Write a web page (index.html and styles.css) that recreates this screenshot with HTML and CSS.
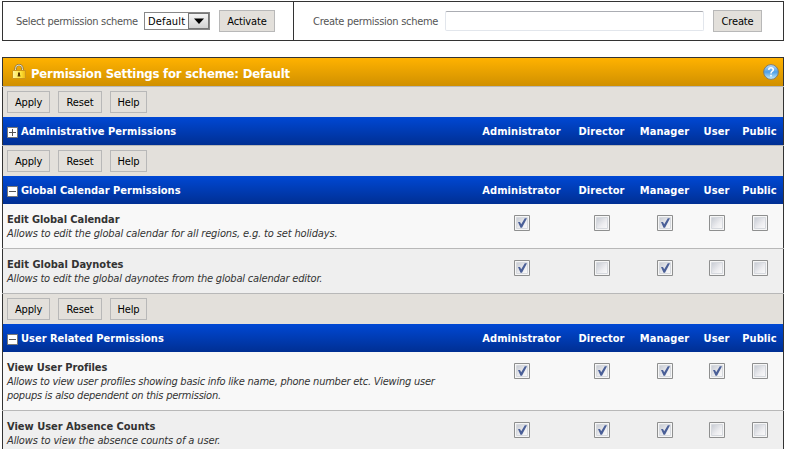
FILE: index.html
```html
<!DOCTYPE html>
<html lang="en">
<head>
<meta charset="utf-8">
<title>Permission Settings</title>
<link rel="stylesheet" href="styles.css">
</head>
<body>
<svg class="defs" aria-hidden="true">
  <defs>
    <linearGradient id="well" x1="0" y1="0" x2="1" y2="1"><stop offset="0" stop-color="#c6cad2"/><stop offset=".6" stop-color="#ededf0"/><stop offset="1" stop-color="#fafafa"/></linearGradient>
    <linearGradient id="gold" x1="0" y1="0" x2="1" y2="0"><stop offset="0" stop-color="#fff4a0"/><stop offset=".6" stop-color="#ffe640"/><stop offset="1" stop-color="#efb810"/></linearGradient>
    <linearGradient id="glass" x1="0" y1="0" x2="0" y2="1"><stop offset="0" stop-color="#bcdcf6"/><stop offset=".5" stop-color="#4f9fe6"/><stop offset="1" stop-color="#c9f0ff"/></linearGradient>
    <symbol id="off" viewBox="0 0 16 16"><path fill="#f6f6f6" stroke="#8e8f8f" d="M.5.5h15v15H.5z"/><path fill="url(#well)" stroke="#d6d9de" d="M2.500 2.500h11v11h-11z"/></symbol>
    <symbol id="on" viewBox="0 0 16 16"><use href="#off"/><path fill="#4a5f97" d="M4 7h2l1.200 2.200L10.800 3.200h2.200L8 12.800H6.500z"/></symbol>
    <symbol id="minus" viewBox="0 0 11 11"><path fill="#fff" stroke="#777" d="M.5.5h10v10H.5z"/><path fill="none" stroke="#555" d="M2 5.500h7"/></symbol>
    <symbol id="plus" viewBox="0 0 11 11"><use href="#minus"/><path fill="none" stroke="#555" d="M5.500 2v7"/></symbol>
  </defs>
</svg>
<div class="schemes">
  <div class="pick"><span class="label">Select permission scheme</span>
    <div class="select"><span>Default</span><i><svg width="10" height="6"><path d="M0 .5h10L5 6z"/></svg></i></div>
    <button class="btn activate">Activate</button></div>
  <div class="make"><span class="label">Create permission scheme</span><input type="text"><button class="btn create">Create</button></div>
</div>
<div class="table">
  <div class="title">
    <svg class="lock" width="14" height="16" viewBox="0 0 14 16"><path d="M3.500 8V4.500a3.500 3.500 0 0 1 7 0V8" fill="none" stroke="#8a7440" stroke-width="2.200"/><path d="M3.500 8V4.500a3.500 3.500 0 0 1 7 0V8" fill="none" stroke="#e4dec4" stroke-width="1"/><path d="M.5 6.500h13v8H.5z" fill="url(#gold)" stroke="#cf9618"/><path d="M6 8.500h2v2l.5 2h-3l.5-2z" fill="#5b3a00"/></svg>
    <h1>Permission Settings for scheme: Default</h1>
    <svg class="help" width="16" height="16" viewBox="0 0 16 16"><circle cx="8" cy="8" r="7.400" fill="url(#glass)" stroke="#807c6c"/><path d="M5.700 5.800Q5.900 3.700 8 3.700T10.300 5.700Q10.300 6.700 9.100 7.400 8 8.100 8 9.400M8 10.700v1.800" fill="none" stroke="#fff" stroke-width="1.600"/></svg>
  </div>
  <div class="rule"></div>
  <div class="tools"><button class="btn apply">Apply</button><button class="btn reset">Reset</button><button class="btn helpb">Help</button></div>
  <div class="row head"><h2 class="wide"><svg><use href="#plus"/></svg><span>Administrative Permissions</span></h2><b>Administrator</b><b>Director</b><b>Manager</b><b>User</b><b>Public</b></div>
  <div class="rule"></div>
  <div class="tools"><button class="btn apply">Apply</button><button class="btn reset">Reset</button><button class="btn helpb">Help</button></div>
  <div class="row head"><h2><svg><use href="#minus"/></svg><span>Global Calendar Permissions</span></h2><b>Administrator</b><b>Director</b><b>Manager</b><b>User</b><b>Public</b></div>
  <div class="row perm"><div><h3 class="snug">Edit Global Calendar</h3><p class="loose">Allows to edit the global calendar for all regions, e.g. to set holidays.</p></div><svg><use href="#on"/></svg><svg><use href="#off"/></svg><svg><use href="#on"/></svg><svg><use href="#off"/></svg><svg><use href="#off"/></svg></div>
  <div class="rule"></div>
  <div class="row perm alt"><div><h3>Edit Global Daynotes</h3><p class="medium">Allows to edit the global daynotes from the global calendar editor.</p></div><svg><use href="#on"/></svg><svg><use href="#off"/></svg><svg><use href="#on"/></svg><svg><use href="#off"/></svg><svg><use href="#off"/></svg></div>
  <div class="rule"></div>
  <div class="tools"><button class="btn apply">Apply</button><button class="btn reset">Reset</button><button class="btn helpb">Help</button></div>
  <div class="row head"><h2><svg><use href="#minus"/></svg><span>User Related Permissions</span></h2><b>Administrator</b><b>Director</b><b>Manager</b><b>User</b><b>Public</b></div>
  <div class="row perm tall"><div><h3 class="snug">View User Profiles</h3><p>Allows to view user profiles showing basic info like name, phone number etc. Viewing user<br>popups is also dependent on this permission.</p></div><svg><use href="#on"/></svg><svg><use href="#on"/></svg><svg><use href="#on"/></svg><svg><use href="#on"/></svg><svg><use href="#off"/></svg></div>
  <div class="rule"></div>
  <div class="row perm alt"><div><h3>View User Absence Counts</h3><p class="loose">Allows to view the absence counts of a user.</p></div><svg><use href="#on"/></svg><svg><use href="#on"/></svg><svg><use href="#on"/></svg><svg><use href="#off"/></svg><svg><use href="#off"/></svg></div>
</div>
</body>
</html>
```
FILE: styles.css
```css
* { box-sizing: border-box; margin: 0; padding: 0; }
html { overflow: hidden; }
body { height: 449px; overflow: hidden; padding: 1px 3px 0 2px; background: #fff; color: #333; font: 11px/14px "DejaVu Sans Condensed", "DejaVu Sans", sans-serif; font-stretch: condensed; }
.defs { position: absolute; width: 0; height: 0; }
svg { display: block; }
.schemes { display: flex; height: 40px; border: 1px solid #333; color: #555; }
.pick, .make { display: flex; align-items: flex-start; }
.pick { width: 291px; padding: 8px 0 0 13px; border-right: 1px solid #333; }
.make { padding: 8px 0 0 19px; }
.label { width: 128px; margin-top: 5px; white-space: nowrap; letter-spacing: -.32px; }
.make .label { width: 132px; letter-spacing: -.28px; }
.select { display: flex; justify-content: space-between; width: 66px; height: 18px; margin: 2px 9px 0 0; border: 1px solid #888; padding-left: 3px; line-height: 17px; color: #000; letter-spacing: .15px; }
.select i { display: flex; align-items: center; justify-content: center; width: 21px; border: 1px solid #777; background: linear-gradient(#f4f4f4, #d2d2d2); }
.btn { height: 22px; border: 1px solid #b8b8b8; background: #e3e0db; color: #000; font: inherit; letter-spacing: -.15px; text-align: center; white-space: nowrap; padding-top: 1px; }
.activate { width: 56px; }
.create { width: 49px; }
.apply { width: 43px; }
.reset { width: 44px; }
.helpb { width: 37px; }
input { width: 259px; height: 20px; margin: 1px 9px 0 0; border: 1px solid #e2e6ec; border-top-color: #abadb3; border-radius: 2px; background: #fff; font: inherit; }
.table { border-top: 1px solid #333; margin-top: 16px; }
.title, .tools, .row { border: solid #333; border-width: 0 1px; }
.rule { height: 1px; background: #b8b8b8; }
.title { display: flex; align-items: flex-start; height: 28px; padding: 5px 4px 0 9px; background: linear-gradient(#ffb200, #d09000); color: #fff; }
.lock { margin-top: 1px; }
h1 { font-size: 13px; line-height: 16px; margin: 3px 0 0 5px; white-space: nowrap; letter-spacing: -.2px; }
.help { margin: 1px 0 0 auto; }
.tools { display: flex; gap: 8px; height: 30px; padding: 4px 0 0 4px; background: #e3e0db; }
.row { display: grid; grid-template-columns: 471px 96px 64px 62px 42px 44px; align-items: start; }
.head { height: 28px; background: linear-gradient(#0048d4, #002f93); color: #fff; }
.head b { margin-top: 8px; text-align: center; white-space: nowrap; letter-spacing: .06px; margin-left: -1px; }
h2 { display: flex; gap: 3px; padding-left: 4px; font-size: 11px; line-height: 14px; white-space: nowrap; }
h2 svg { width: 11px; height: 11px; margin-top: 10px; }
h2 span { margin-top: 8px; }
.wide { letter-spacing: .08px; }
.perm { height: 44px; background: #f8f8f8; }
.alt { background: #efefef; }
.tall { height: 58px; }
.perm > div { padding: 9px 0 0 4px; }
h3 { font-size: 11px; line-height: 14px; }
h3.snug { letter-spacing: -.08px; }
p { font-style: italic; white-space: nowrap; letter-spacing: -.24px; }
p.loose { letter-spacing: -.14px; }
p.medium { letter-spacing: -.19px; }
.perm > svg { width: 16px; height: 16px; margin-top: 11px; justify-self: center; }
```
